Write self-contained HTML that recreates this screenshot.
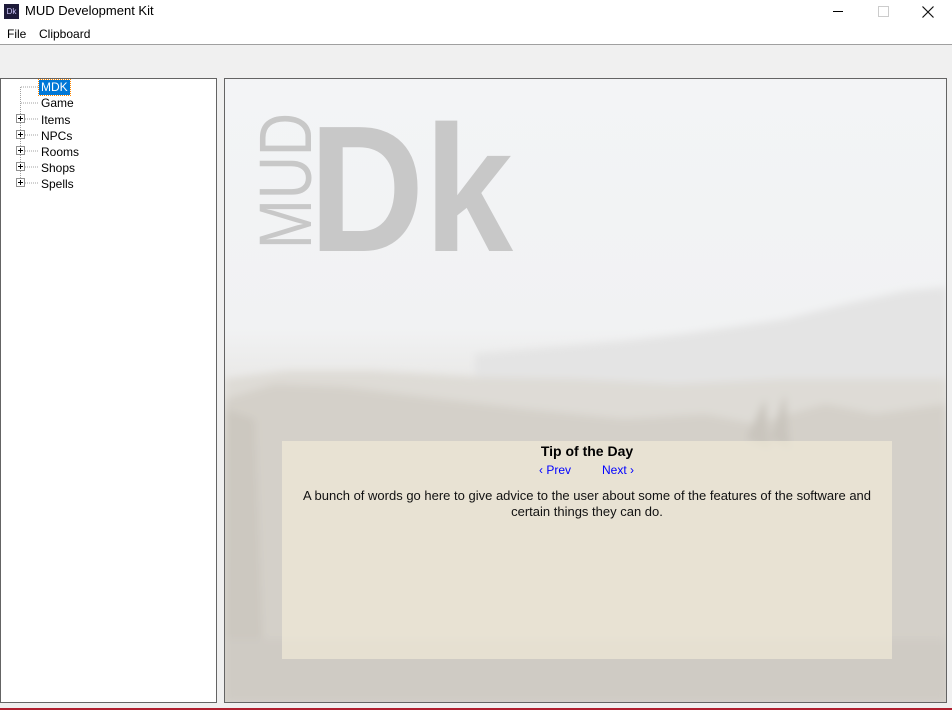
<!DOCTYPE html>
<html><head><style>
body{margin:0;width:952px;height:710px;overflow:hidden;background:#f0f0f0;font-family:"Liberation Sans",sans-serif;font-size:12px;position:relative}
.abs{position:absolute}
</style></head><body>
<div class="abs" style="left:0;top:0;width:952px;height:44px;background:#fff"></div>
<div class="abs" style="left:4px;top:4px;width:15px;height:15px;background:#1e1b3a;color:#cfc8ff;font-size:8px;line-height:15px;text-align:center">Dk</div>
<div class="abs" style="left:25px;top:3px;font-size:13px;color:#000">MUD Development Kit</div>
<div class="abs" style="left:833px;top:11px;width:10px;height:1px;background:#000"></div>
<div class="abs" style="left:878px;top:6px;width:9px;height:9px;border:1px solid #ccc"></div>
<svg class="abs" style="left:922px;top:6px" width="12" height="12"><path d="M0.5 0.5L11.5 11.5M11.5 0.5L0.5 11.5" stroke="#111" stroke-width="1.2"/></svg>
<div class="abs" style="left:7px;top:27px;font-size:12px">File</div>
<div class="abs" style="left:39px;top:27px;font-size:12px">Clipboard</div>
<div class="abs" style="left:0;top:44px;width:952px;height:1px;background:#a0a0a0"></div>

<div class="abs" style="left:0;top:78px;width:215px;height:623px;background:#fff;border:1px solid #646464"></div>
<svg class="abs" style="left:0;top:78px" width="217" height="120">
<g stroke="#a0a0a0" stroke-dasharray="1,1" fill="none">
<path d="M20.5 9V105M21 9H39M21 25H39M25 41H39M25 57H39M25 73H39M25 89H39M25 105H39"/>
</g>
<g fill="#fff" stroke="#919191">
<rect x="16.5" y="36.5" width="8" height="8"/><rect x="16.5" y="52.5" width="8" height="8"/><rect x="16.5" y="68.5" width="8" height="8"/><rect x="16.5" y="84.5" width="8" height="8"/><rect x="16.5" y="100.5" width="8" height="8"/>
</g>
<g stroke="#000"><path d="M18 40.5h5M20.5 38v5M18 56.5h5M20.5 54v5M18 72.5h5M20.5 70v5M18 88.5h5M20.5 86v5M18 104.5h5M20.5 102v5"/></g>
</svg>
<div class="abs" style="left:39px;top:80px;height:15px;padding:0 2px;background:#0078d7;color:#fff;outline:1px dotted #f80;line-height:15px">MDK</div>
<div class="abs" style="left:41px;top:96px;line-height:14px">Game<br><span style="line-height:16px;display:block;margin-top:2px">Items</span><span style="display:block;line-height:16px">NPCs</span><span style="display:block;line-height:16px">Rooms</span><span style="display:block;line-height:16px">Shops</span><span style="display:block;line-height:16px">Spells</span></div>

<div class="abs" style="left:224px;top:78px;width:721px;height:623px;border:1px solid #646464;overflow:hidden;background:linear-gradient(#f3f4f6 0%,#f1f2f3 40%,#e8e7e5 50%,#dcdad5 60%,#d6d3cc 100%)">
<svg width="721" height="623" style="position:absolute;left:0;top:0">
<defs><filter id="b"><feGaussianBlur stdDeviation="4"/></filter></defs>
<g filter="url(#b)">
<path d="M250 275L400 262L460 255L560 240L620 225L680 212L721 208V310H250Z" fill="#e4e4e4"/>
<path d="M0 300L60 292L150 292L250 298L350 300L450 305L560 300L721 300V623H0Z" fill="#dedbd6"/>
<path d="M0 320L50 305L120 308L200 318L300 330L400 340L480 335L530 345L600 325L650 335L721 325V623H0Z" fill="#d4d0c9"/>
<path d="M0 330L30 340L40 623H0Z" fill="#ccc8c0"/>
<path d="M521 360L540 320L545 370ZM545 360L560 315L565 370Z" fill="#c9c5bd"/>
<path d="M0 560L721 560V623H0Z" fill="#cfcbc4"/>
</g>
<g fill="#c8c8c8" font-family="Liberation Sans,sans-serif">
<text x="84" y="172" font-size="180" font-weight="bold" textLength="204" lengthAdjust="spacingAndGlyphs">Dk</text>
<text transform="translate(86,170) rotate(-90)" font-size="74" textLength="136" lengthAdjust="spacingAndGlyphs">MUD</text>
</g>
</svg>
<div class="abs" style="left:57px;top:362px;width:610px;height:218px;background:rgba(245,239,218,0.6)"></div>
<div class="abs" style="left:57px;top:364px;width:610px;text-align:center;font-weight:bold;font-size:14px">Tip of the Day</div>
<div class="abs" style="left:314px;top:384px;color:#0000ff">‹ Prev</div>
<div class="abs" style="left:377px;top:384px;color:#0000ff">Next ›</div>
<div class="abs" style="left:72px;top:409px;width:580px;text-align:center;font-size:13px;line-height:16px;color:#111">A bunch of words go here to give advice to the user about some of the features of the software and certain things they can do.</div>
</div>
<div class="abs" style="left:0;top:708px;width:952px;height:2px;background:#b02030"></div>
</body></html>
